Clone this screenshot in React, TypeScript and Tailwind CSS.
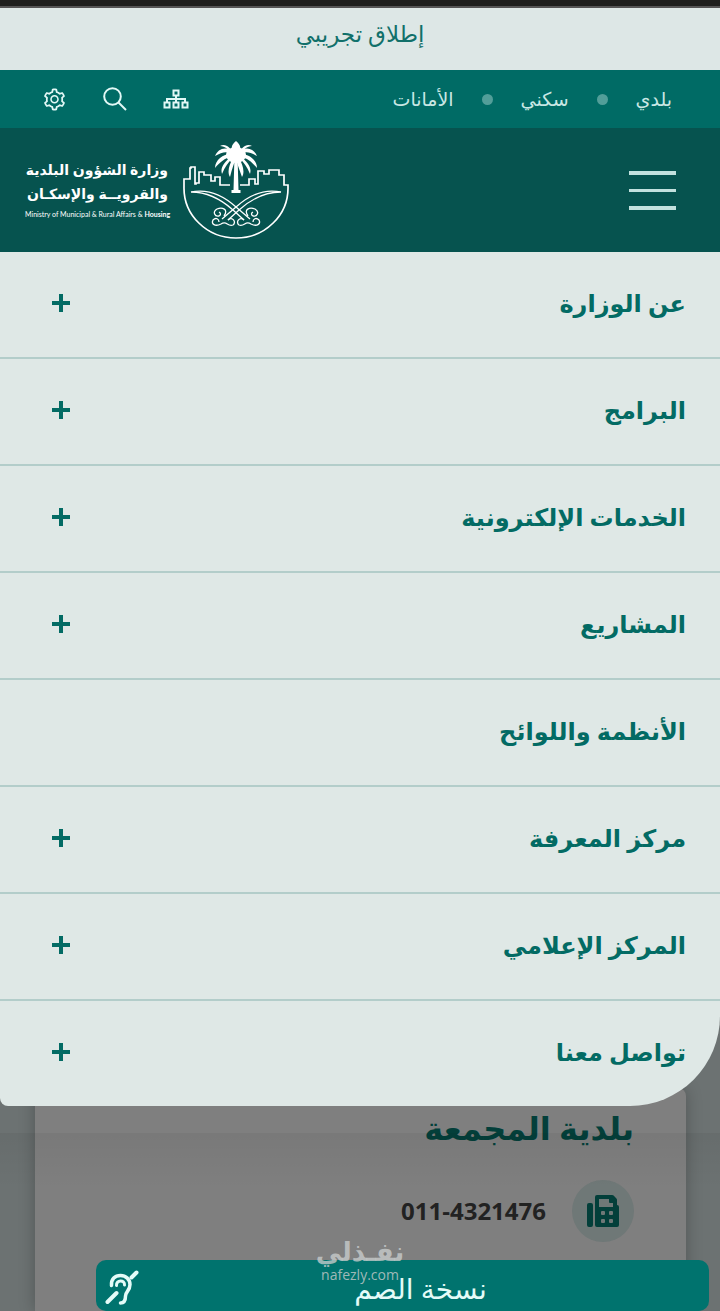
import { FaFax } from "react-icons/fa";
import { AiOutlineSetting } from "react-icons/ai";

const QUICK_LINKS = ["بلدي", "سكني", "الأمانات"];

const MENU: Array<{ label: string; expandable: boolean }> = [
  { label: "عن الوزارة", expandable: true },
  { label: "البرامج", expandable: true },
  { label: "الخدمات الإلكترونية", expandable: true },
  { label: "المشاريع", expandable: true },
  { label: "الأنظمة واللوائح", expandable: false },
  { label: "مركز المعرفة", expandable: true },
  { label: "المركز الإعلامي", expandable: true },
  { label: "تواصل معنا", expandable: true },
];

function SitemapIcon() {
  return (
    <svg width="26" height="20" viewBox="0 0 26 20" fill="none" stroke="currentColor" strokeWidth="2">
      <path d="M10.5 1.5h5v5h-5zM1.5 13.5h5v5h-5zM10.5 13.5h5v5h-5zM19.5 13.5h5v5h-5z" />
      <path d="M13 6.5v7M4 13.5V10h18v3.5" />
    </svg>
  );
}

function SearchIcon() {
  return (
    <svg width="24" height="24" viewBox="0 0 24 24" fill="none" stroke="currentColor" strokeWidth="2">
      <circle cx="9.5" cy="9.5" r="8.3" />
      <path d="M15.5 15.5L23 23" />
    </svg>
  );
}

function PlusIcon() {
  return (
    <svg width="18" height="18" viewBox="0 0 18 18" stroke="currentColor" strokeWidth="4">
      <path d="M9 0v18M0 9h18" />
    </svg>
  );
}

function DeafIcon() {
  return (
    <svg
      width="34"
      height="36"
      viewBox="0 0 34 36"
      fill="none"
      stroke="currentColor"
      strokeWidth="3.5"
      strokeLinecap="round"
      className="absolute left-[9px]"
    >
      <path d="M2.5 32L11.5 23M26.5 7.5L31.5 2.5" strokeWidth="4" />
      <path d="M6.5 15.5C6 9 10 5.500 15.5 5.500C21 5.500 25 9.500 25 14.500C25 21 20.5 21.500 20.5 26C20.5 31 19 33 15.5 33" />
      <path d="M11.5 15.5C11 9.500 20 9.500 19.5 15" strokeWidth="3" />
    </svg>
  );
}

function Emblem() {
  return (
    <svg width="108" height="98" viewBox="0 0 108 98" fill="none" stroke="#fff" strokeWidth="1.7">
      {/* Skyline and bowl */}
      <path d="M48 44H38V36H33V40H29V34H22V31H17V42H14V43H13V26H9V27H8V38H2V46A52 50 0 0 0 54 97A52 50 0 0 0 106 46V44H102V34H97V29H87V33H82V30H76V43H73V38H67V44H58" />
      {/* Palm */}
      <g fill="#fff" stroke="none">
        <path d="M52.5 14h3l1 35h2v3h-9v-3h2z" />
        <path d="M53 12C44 4 36 8 33 15C40 11 45 10 49 13C41 13 33 19 33 27C38 21 43 17 49 16C42 21 38 27 40 33C43 26 46 21 51 17C47 24 45 31 48 36C50 28 52 22 54 17C55 22 57 28 60 36C63 31 61 24 57 17C62 21 65 26 68 33C70 27 66 21 59 16C65 17 70 21 75 27C75 19 67 13 59 13C63 10 68 11 75 15C72 8 64 4 55 12Z" />
        <path d="M53 13C48 7 44 2 38 5C43 5 47 9 52 15ZM55 13C60 7 64 2 70 5C65 5 61 9 56 15ZM51 13C49 7 49 4 54 0C59 4 59 7 57 13Z" />
        <ellipse cx="54" cy="14" rx="10" ry="8" />
      </g>
      {/* Crossed swords */}
      <g id="sword" strokeWidth="1.300">
        <path d="M9 51C28 47 43 56 54 66L68 78M9 51C26 51 41 60 51 69L62 79" />
        <path d="M62 79C58 75 53 81 57 84C63 86 63 79 69 83C75 86 79 83 77 79C74 76 71 78 71 81" />
        <path d="M66 75C61 68 68 66 73 68C78 71 75 76 71 75C69 74 69 72 71 71" />
      </g>
      <g transform="translate(108 0) scale(-1 1)" strokeWidth="1.300">
        <path d="M9 51C28 47 43 56 54 66L68 78M9 51C26 51 41 60 51 69L62 79" />
        <path d="M62 79C58 75 53 81 57 84C63 86 63 79 69 83C75 86 79 83 77 79C74 76 71 78 71 81" />
        <path d="M66 75C61 68 68 66 73 68C78 71 75 76 71 75C69 74 69 72 71 71" />
      </g>
    </svg>
  );
}

function TopBar() {
  return (
    <div className="flex h-[58px] items-center justify-between bg-[#006b65] pr-12 pl-[42px] text-[#c9e7e4]">
      <nav className="flex items-center gap-7 text-[19px]">
        {QUICK_LINKS.map((label, i) => (
          <span key={label} className="flex items-center gap-7">
            {i > 0 && <span className="size-[11px] rounded-full bg-[#529e99]" />}
            <a href="#">{label}</a>
          </span>
        ))}
      </nav>
      <div className="flex items-center gap-9 text-[#e2f8f6]">
        <button type="button" aria-label="خريطة الموقع">
          <SitemapIcon />
        </button>
        <button type="button" aria-label="بحث">
          <SearchIcon />
        </button>
        <button type="button" aria-label="الإعدادات">
          <AiOutlineSetting size={25} />
        </button>
      </div>
    </div>
  );
}

function Header() {
  return (
    <header className="flex h-[124px] items-center justify-between bg-[#06534f] pr-11 pl-[25px]">
      <button type="button" aria-label="القائمة" className="flex w-[47px] flex-col gap-[14px]">
        <span className="h-1 w-full bg-[#c2e1de]" />
        <span className="h-[3px] w-full bg-[#c2e1de]" />
        <span className="h-1 w-full bg-[#c2e1de]" />
      </button>
      <a href="#" className="flex items-center gap-[14px] text-white">
        <Emblem />
        <span className="flex w-[143px] flex-col whitespace-nowrap">
          <span className="text-[14px] leading-6 font-bold">وزارة الشؤون البلدية</span>
          <span className="text-[14px] leading-6 font-bold">والقرويــة والإسكـان</span>
          <span dir="ltr" className="font-['Lato',sans-serif] text-[7px] leading-4">
            Ministry of Municipal &amp; Rural Affairs &amp; <b>Housing</b>
          </span>
        </span>
      </a>
    </header>
  );
}

function MainMenu() {
  return (
    <nav className="relative z-10 overflow-hidden rounded-br-[90px] rounded-bl-lg bg-[#dfe8e6] text-[#036b64]">
      <ul className="divide-y-2 divide-[#b3cdca]">
        {MENU.map(({ label, expandable }) => (
          <li key={label} className="flex h-[107px] items-center justify-between pr-[34px] pb-1 pl-[52px] last:h-[105px]">
            <a href="#" className="text-[24px] font-bold">
              {label}
            </a>
            {expandable && (
              <button type="button" aria-label={label}>
                <PlusIcon />
              </button>
            )}
          </li>
        ))}
      </ul>
    </nav>
  );
}

function Municipality() {
  return (
    <main className="relative -mt-[100px] bg-[#6c7272] pt-[82px] pr-[34px] pl-[35px]">
      <section className="h-[223px] rounded-t-lg bg-[#7f7f7f] pt-[18px] pr-[52px] shadow-[0_0_16px_rgba(0,0,0,0.25)]">
        <h2 className="text-[32px] leading-[44px] font-bold text-[#033f3a]">بلدية المجمعة</h2>
        <div className="mt-[30px] flex items-center gap-[26px]">
          <span className="flex size-[62px] items-center justify-center rounded-full bg-[#6f7877] text-[#033f3a]">
            <FaFax size={32} />
          </span>
          <span dir="ltr" className="text-[24px] font-bold text-[#222]">
            011-4321476
          </span>
        </div>
      </section>
      <div className="absolute inset-x-0 top-[127px] h-14 bg-linear-to-b from-black/5 to-transparent" />
      <button
        type="button"
        className="absolute right-[11px] bottom-0 left-24 flex h-[51px] items-center justify-center rounded-[10px] bg-[#00736e] pt-1 pl-9 text-[28px] text-[#e4fbf8]"
      >
        نسخة الصم
        <DeafIcon />
      </button>
      <div className="pointer-events-none absolute inset-x-0 bottom-7 flex flex-col items-center text-[#c8cccc]/80">
        <span className="text-[26px] leading-8 font-bold">نفـذلي</span>
        <span className="text-[14px] leading-4">nafezly.com</span>
      </div>
    </main>
  );
}

export default function App() {
  return (
    <div dir="rtl" lang="ar" className="min-h-screen bg-[#6c7272] font-['Open_Sans','DejaVu_Sans',sans-serif]">
      <div className="h-2 border-b-2 border-[#555] bg-[#1e1f1d]" />
      <div className="h-[62px] bg-[#dde7e6] pt-2 text-center text-[23px] text-[#11706a]">إطلاق تجريبي</div>
      <TopBar />
      <Header />
      <MainMenu />
      <Municipality />
    </div>
  );
}
